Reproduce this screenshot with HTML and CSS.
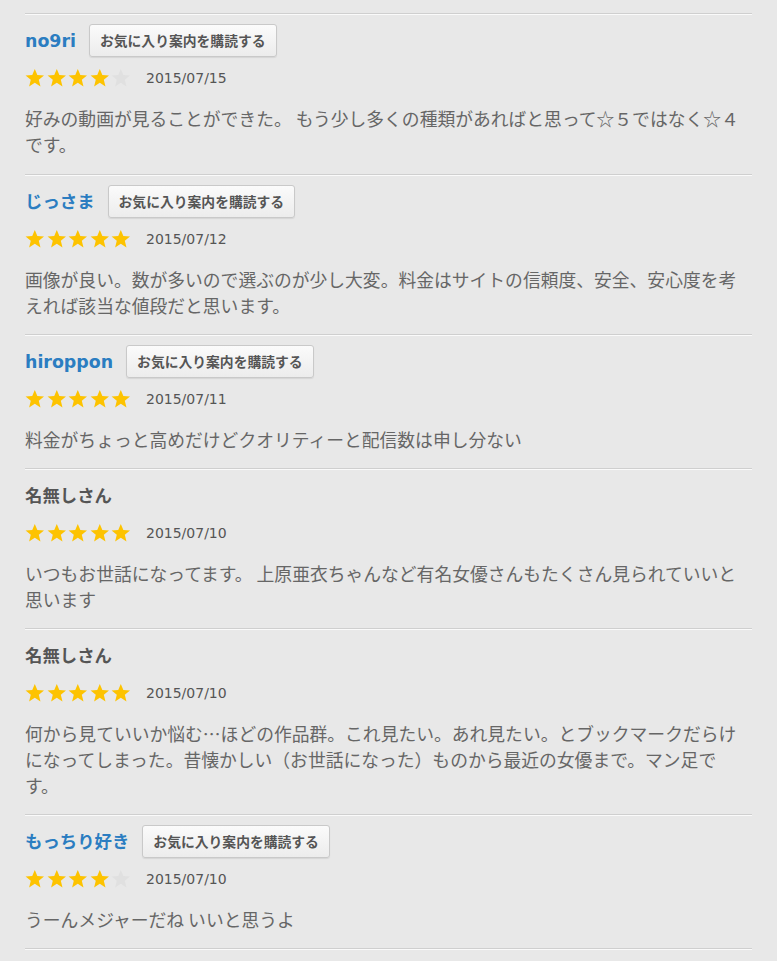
FILE: index.html
```html
<!DOCTYPE html>
<html lang="ja">
<head>
<meta charset="utf-8">
<title>レビュー</title>
<link rel="stylesheet" href="styles.css">
</head>
<body>
<svg width="0" height="0" class="defs">
  <defs>
    <path id="star" d="M10 0.8 L12.6 7 L19.4 7.4 L14.1 11.8 L15.8 18.6 L10 14.9 L4.2 18.6 L5.9 11.8 L0.6 7.4 L7.4 7 Z"/>
  </defs>
</svg>
<div class="reviews">
  <div class="review">
    <div class="head">
      <span class="name link">no9ri</span>
      <button class="sub">お気に入り案内を購読する</button>
    </div>
    <div class="meta">
      <span class="stars">
        <svg class="st on" viewBox="0 0 20 20"><use href="#star"/></svg>
        <svg class="st on" viewBox="0 0 20 20"><use href="#star"/></svg>
        <svg class="st on" viewBox="0 0 20 20"><use href="#star"/></svg>
        <svg class="st on" viewBox="0 0 20 20"><use href="#star"/></svg>
        <svg class="st off" viewBox="0 0 20 20"><use href="#star"/></svg>
      </span>
      <span class="date">2015/07/15</span>
    </div>
    <p class="body">好みの動画が見ることができた。 もう少し多くの種類があればと思って☆５ではなく☆４です。</p>
  </div>

  <div class="review">
    <div class="head">
      <span class="name link">じっさま</span>
      <button class="sub">お気に入り案内を購読する</button>
    </div>
    <div class="meta">
      <span class="stars">
        <svg class="st on" viewBox="0 0 20 20"><use href="#star"/></svg>
        <svg class="st on" viewBox="0 0 20 20"><use href="#star"/></svg>
        <svg class="st on" viewBox="0 0 20 20"><use href="#star"/></svg>
        <svg class="st on" viewBox="0 0 20 20"><use href="#star"/></svg>
        <svg class="st on" viewBox="0 0 20 20"><use href="#star"/></svg>
      </span>
      <span class="date">2015/07/12</span>
    </div>
    <p class="body">画像が良い。数が多いので選ぶのが少し大変。料金はサイトの信頼度、安全、安心度を考えれば該当な値段だと思います。</p>
  </div>

  <div class="review">
    <div class="head">
      <span class="name link">hiroppon</span>
      <button class="sub">お気に入り案内を購読する</button>
    </div>
    <div class="meta">
      <span class="stars">
        <svg class="st on" viewBox="0 0 20 20"><use href="#star"/></svg>
        <svg class="st on" viewBox="0 0 20 20"><use href="#star"/></svg>
        <svg class="st on" viewBox="0 0 20 20"><use href="#star"/></svg>
        <svg class="st on" viewBox="0 0 20 20"><use href="#star"/></svg>
        <svg class="st on" viewBox="0 0 20 20"><use href="#star"/></svg>
      </span>
      <span class="date">2015/07/11</span>
    </div>
    <p class="body">料金がちょっと高めだけどクオリティーと配信数は申し分ない</p>
  </div>

  <div class="review">
    <div class="head">
      <span class="name anon">名無しさん</span>
    </div>
    <div class="meta">
      <span class="stars">
        <svg class="st on" viewBox="0 0 20 20"><use href="#star"/></svg>
        <svg class="st on" viewBox="0 0 20 20"><use href="#star"/></svg>
        <svg class="st on" viewBox="0 0 20 20"><use href="#star"/></svg>
        <svg class="st on" viewBox="0 0 20 20"><use href="#star"/></svg>
        <svg class="st on" viewBox="0 0 20 20"><use href="#star"/></svg>
      </span>
      <span class="date">2015/07/10</span>
    </div>
    <p class="body">いつもお世話になってます。 上原亜衣ちゃんなど有名女優さんもたくさん見られていいと思います</p>
  </div>

  <div class="review">
    <div class="head">
      <span class="name anon">名無しさん</span>
    </div>
    <div class="meta">
      <span class="stars">
        <svg class="st on" viewBox="0 0 20 20"><use href="#star"/></svg>
        <svg class="st on" viewBox="0 0 20 20"><use href="#star"/></svg>
        <svg class="st on" viewBox="0 0 20 20"><use href="#star"/></svg>
        <svg class="st on" viewBox="0 0 20 20"><use href="#star"/></svg>
        <svg class="st on" viewBox="0 0 20 20"><use href="#star"/></svg>
      </span>
      <span class="date">2015/07/10</span>
    </div>
    <p class="body">何から見ていいか悩む…ほどの作品群。これ見たい。あれ見たい。とブックマークだらけになってしまった。昔懐かしい（お世話になった）ものから最近の女優まで。マン足です。</p>
  </div>

  <div class="review">
    <div class="head">
      <span class="name link">もっちり好き</span>
      <button class="sub">お気に入り案内を購読する</button>
    </div>
    <div class="meta">
      <span class="stars">
        <svg class="st on" viewBox="0 0 20 20"><use href="#star"/></svg>
        <svg class="st on" viewBox="0 0 20 20"><use href="#star"/></svg>
        <svg class="st on" viewBox="0 0 20 20"><use href="#star"/></svg>
        <svg class="st on" viewBox="0 0 20 20"><use href="#star"/></svg>
        <svg class="st off" viewBox="0 0 20 20"><use href="#star"/></svg>
      </span>
      <span class="date">2015/07/10</span>
    </div>
    <p class="body">うーんメジャーだね いいと思うよ</p>
  </div>

  <div class="end"></div>
</div>
</body>
</html>
```

FILE: styles.css
```css
html, body {
  margin: 0;
  padding: 0;
  background: #e8e8e8;
}

.defs {
  position: absolute;
  width: 0;
  height: 0;
}

.reviews {
  padding: 13px 25px 0;
}

.review,
.end {
  border-top: 1px solid #cfcfcf;
  box-shadow: inset 0 1px 0 #fafafa;
}

.review {
  padding: 10px 0 16px;
}

.review:first-child {
  padding-bottom: 17px;
}

.head {
  display: flex;
  align-items: center;
  gap: 13px;
  height: 33px;
}

.name {
  font-family: "DejaVu Sans", "Noto Sans CJK JP", sans-serif;
  font-weight: bold;
  font-size: 17.4px;
  line-height: 1;
  position: relative;
  top: 1px;
}

.name.link {
  color: #2b7dc1;
}

.name.anon {
  color: #555;
}

.sub {
  height: 33px;
  padding: 0 10px;
  border: 1px solid #c9c9c9;
  border-radius: 3px;
  background: linear-gradient(#fbfbfb, #ececec);
  box-shadow: 0 1px 1px rgba(0, 0, 0, 0.08);
  color: #555;
  font-family: "Noto Sans CJK JP", sans-serif;
  font-weight: bold;
  font-size: 13.8px;
  line-height: 1;
}

.meta {
  display: flex;
  align-items: center;
  height: 20px;
  margin-top: 11px;
}

.stars {
  display: flex;
  gap: 2px;
  margin-right: 15px;
}

.st {
  width: 19.6px;
  height: 20px;
  display: block;
}

.st.on {
  fill: #fdc300;
}

.st.off {
  fill: #e0e0e0;
}

.date {
  font-family: "DejaVu Sans", sans-serif;
  font-size: 14px;
  color: #555;
}

.body {
  margin: 17px 0 0;
  padding-right: 9px;
  font-family: "Noto Sans CJK JP", sans-serif;
  font-size: 17.8px;
  line-height: 26px;
  color: #666;
}

.end {
  height: 10px;
}
```
